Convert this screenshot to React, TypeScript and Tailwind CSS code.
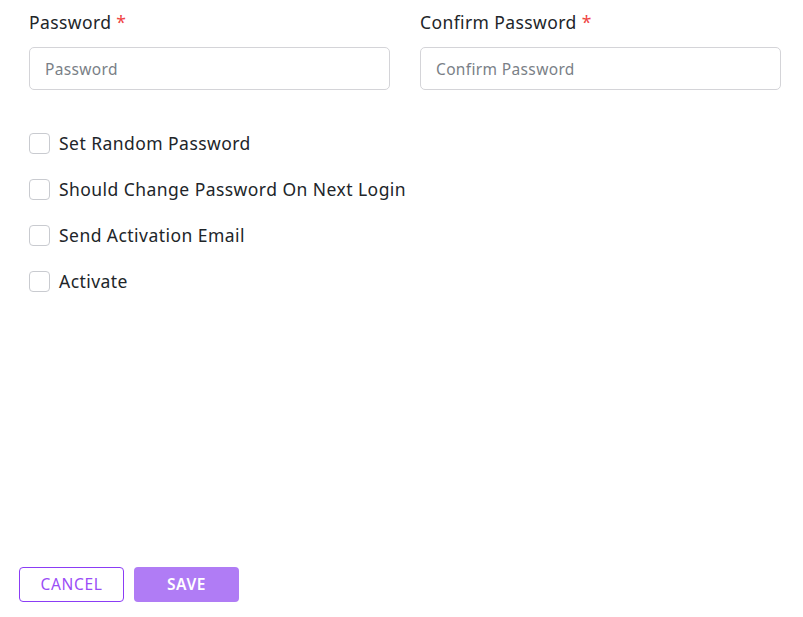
import { useState } from "react";

const font = { fontFamily: '"Noto Sans", "Open Sans", sans-serif' };

function Field({ label, placeholder }: { label: string; placeholder: string }) {
  return (
    <div className="flex flex-col">
      <label className="h-[24px] text-[17.5px] leading-[24px] tracking-[0.4px] text-[#212529]">
        {label} <span className="text-[#ef4444]">*</span>
      </label>
      <input
        type="text"
        placeholder={placeholder}
        className="mt-[13px] h-[43px] w-full rounded-[5px] border border-[#d4d4d8] bg-white px-[15px] text-[15.5px] tracking-[0.35px] text-[#212529] outline-none placeholder:text-[#7a7f87]"
      />
    </div>
  );
}

function Check({ label }: { label: string }) {
  const [on, setOn] = useState(false);
  return (
    <label className="flex h-[46px] cursor-pointer items-center gap-[9px]">
      <input
        type="checkbox"
        checked={on}
        onChange={() => setOn(!on)}
        className="h-[21px] w-[21px] appearance-none rounded-[4px] border border-[#c9cbd0] bg-white checked:bg-[#a86ff3]"
      />
      <span className="text-[17.5px] tracking-[0.45px] text-[#212529]">{label}</span>
    </label>
  );
}

export default function App() {
  return (
    <div className="flex h-[617px] w-[803px] flex-col bg-white" style={font}>
      <div className="grid grid-cols-2 gap-[30px] pl-[29px] pr-[22px] pt-[10px]">
        <Field label="Password" placeholder="Password" />
        <Field label="Confirm Password" placeholder="Confirm Password" />
      </div>

      <div className="mt-[30px] flex flex-col pl-[29px]">
        <Check label="Set Random Password" />
        <Check label="Should Change Password On Next Login" />
        <Check label="Send Activation Email" />
        <Check label="Activate" />
      </div>

      <div className="mt-auto flex gap-[10px] pb-[15px] pl-[19px]">
        <button
          type="button"
          className="h-[35px] w-[105px] rounded-[4px] border border-[#8b3df5] bg-white text-[15.5px] tracking-[0.7px] text-[#9a4df6]"
        >
          CANCEL
        </button>
        <button
          type="button"
          className="h-[35px] w-[105px] rounded-[4px] bg-[#b07cf5] text-[15.5px] font-semibold tracking-[0.6px] text-white"
        >
          SAVE
        </button>
      </div>
    </div>
  );
}
